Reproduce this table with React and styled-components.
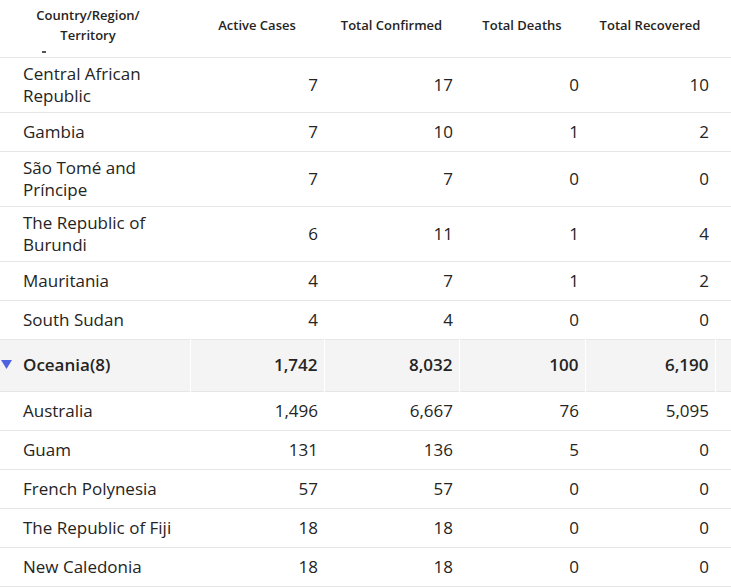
import React from 'react';
import styled, { createGlobalStyle } from 'styled-components';

const GlobalStyle = createGlobalStyle`
  html, body {
    margin: 0;
    padding: 0;
    background: #fff;
  }
  body {
    font-family: "Open Sans", "Noto Sans", "Liberation Sans", sans-serif;
    color: #252423;
  }
  * {
    box-sizing: border-box;
  }
`;

const Wrap = styled.div`
  width: 731px;
  height: 587px;
  overflow: hidden;
  background: #fff;
`;

const Table = styled.table`
  width: 731px;
  table-layout: fixed;
  border-collapse: collapse;
`;

const HeadCell = styled.th`
  height: 57px;
  padding: 0 6px;
  vertical-align: top;
  font-size: 13px;
  font-weight: 600;
  line-height: 20px;
  color: #252423;
  text-align: center;
  border-bottom: 1.5px solid #e6e6e6;
  white-space: nowrap;
`;

const HeadInner = styled.div`
  padding-top: ${(p) => (p.$stack ? '5px' : '15px')};
  padding-right: ${(p) => (p.$stack ? '14px' : '0')};
  height: 56px;
  overflow: hidden;
`;

const HeadLine = styled.div`
  line-height: 20px;
`;

const Tick = styled.span`
  display: block;
  width: 4px;
  height: 2px;
  background: #555;
  margin: 6px 0 0 36px;
`;

const Row = styled.tr`
  border-bottom: 1.5px solid #e6e6e6;
  background: ${(p) => (p.$group ? '#f4f4f4' : '#fff')};
`;

const Cell = styled.td`
  height: ${(p) => (p.$group ? '52px' : p.$tall ? '55px' : '39px')};
  padding: ${(p) => (p.$num ? '0 6px 0 0' : '0 6px 0 23px')};
  text-align: ${(p) => (p.$num ? 'right' : 'left')};
  font-size: 17px;
  line-height: 22px;
  font-weight: ${(p) => (p.$bold ? 600 : 400)};
  color: #252423;
  vertical-align: middle;
  border-right: ${(p) => (p.$group ? '1.5px solid #fff' : 'none')};
`;

const GroupName = styled.div`
  position: relative;
`;

const Caret = styled.svg`
  position: absolute;
  left: -22px;
  top: 6px;
`;

const countries = [
  { name: 'Central African Republic', tall: true, v: ['7', '17', '0', '10'] },
  { name: 'Gambia', v: ['7', '10', '1', '2'] },
  { name: 'São Tomé and Príncipe', tall: true, v: ['7', '7', '0', '0'] },
  { name: 'The Republic of Burundi', tall: true, v: ['6', '11', '1', '4'] },
  { name: 'Mauritania', v: ['4', '7', '1', '2'] },
  { name: 'South Sudan', v: ['4', '4', '0', '0'] },
];

const oceania = [
  { name: 'Australia', v: ['1,496', '6,667', '76', '5,095'] },
  { name: 'Guam', v: ['131', '136', '5', '0'] },
  { name: 'French Polynesia', v: ['57', '57', '0', '0'] },
  { name: 'The Republic of Fiji', v: ['18', '18', '0', '0'] },
  { name: 'New Caledonia', v: ['18', '18', '0', '0'] },
];

const DataRow = ({ item }) => (
  <Row>
    <Cell $tall={item.tall}>{item.name}</Cell>
    {item.v.map((n, i) => (
      <Cell key={i} $num $tall={item.tall}>{n}</Cell>
    ))}
    <Cell $tall={item.tall} />
  </Row>
);

export default function App() {
  return (
    <Wrap>
      <GlobalStyle />
      <Table>
        <colgroup>
          <col style={{ width: 190 }} />
          <col style={{ width: 134 }} />
          <col style={{ width: 135 }} />
          <col style={{ width: 126 }} />
          <col style={{ width: 130 }} />
          <col style={{ width: 16 }} />
        </colgroup>
        <thead>
          <tr>
            <HeadCell>
              <HeadInner $stack>
                <HeadLine>Country/Region/</HeadLine>
                <HeadLine>Territory</HeadLine>
                <Tick />
              </HeadInner>
            </HeadCell>
            <HeadCell><HeadInner>Active Cases</HeadInner></HeadCell>
            <HeadCell><HeadInner>Total Confirmed</HeadInner></HeadCell>
            <HeadCell><HeadInner>Total Deaths</HeadInner></HeadCell>
            <HeadCell><HeadInner>Total Recovered</HeadInner></HeadCell>
            <HeadCell />
          </tr>
        </thead>
        <tbody>
          {countries.map((c) => (
            <DataRow key={c.name} item={c} />
          ))}
          <Row $group>
            <Cell $group $bold>
              <GroupName>
                <Caret width="11" height="9" viewBox="0 0 11 9">
                  <path d="M0 0 L11 0 L5.5 9 Z" fill="#4f63e0" />
                </Caret>
                Oceania(8)
              </GroupName>
            </Cell>
            <Cell $group $num $bold>1,742</Cell>
            <Cell $group $num $bold>8,032</Cell>
            <Cell $group $num $bold>100</Cell>
            <Cell $group $num $bold>6,190</Cell>
            <Cell $group />
          </Row>
          {oceania.map((c) => (
            <DataRow key={c.name} item={c} />
          ))}
        </tbody>
      </Table>
    </Wrap>
  );
}
